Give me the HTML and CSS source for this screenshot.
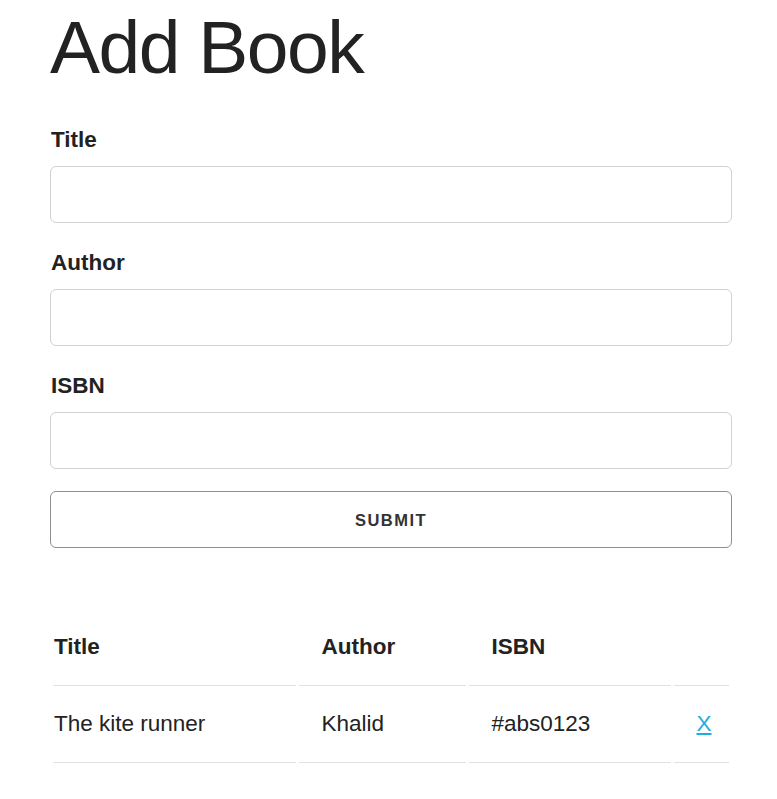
FILE: index.html
```html
<!DOCTYPE html>
<html lang="en">
<head>
<meta charset="utf-8">
<title>Add Book</title>
<link rel="stylesheet" href="styles.css">
</head>
<body>
<div class="container">
  <h1 class="title">Add Book</h1>
  <form class="book-form">
    <label class="field-label" for="title">Title</label>
    <input class="field-input" type="text" id="title">
    <label class="field-label" for="author">Author</label>
    <input class="field-input" type="text" id="author">
    <label class="field-label" for="isbn">ISBN</label>
    <input class="field-input" type="text" id="isbn">
    <button class="submit-btn" type="submit">Submit</button>
  </form>
  <table class="book-table">
    <thead>
      <tr>
        <th class="col-title">Title</th>
        <th class="col-author">Author</th>
        <th class="col-isbn">ISBN</th>
        <th class="col-del"></th>
      </tr>
    </thead>
    <tbody>
      <tr>
        <td>The kite runner</td>
        <td>Khalid</td>
        <td>#abs0123</td>
        <td><a class="delete" href="#">X</a></td>
      </tr>
    </tbody>
  </table>
</div>
</body>
</html>
```

FILE: styles.css
```css
html, body {
  margin: 0;
  padding: 0;
  background: #fff;
}

body {
  font-family: "Liberation Sans", Arial, Helvetica, sans-serif;
  font-size: 22.5px;
  line-height: 36px;
  color: #222;
}

.container {
  width: 682px;
  margin-left: 50px;
  padding-top: 2px;
}

.title {
  margin: 0 0 30px 0;
  font-size: 75px;
  line-height: 90px;
  font-weight: 400;
  letter-spacing: -1.5px;
}

.book-form {
  margin: 0 0 61px 0;
  display: flex;
  flex-direction: column;
}

.field-label {
  display: block;
  font-weight: 700;
  margin-bottom: 7.5px;
  padding-left: 1px;
}

.field-input {
  box-sizing: border-box;
  width: 100%;
  height: 57px;
  padding: 9px 15px;
  border: 1px solid #d1d1d1;
  border-radius: 6px;
  background: #fff;
  margin: 0 0 22.5px 0;
  font: inherit;
}

.submit-btn {
  box-sizing: border-box;
  width: 100%;
  height: 57px;
  margin: 0;
  padding: 2px 45px 0;
  border: 1px solid #8f8f8f;
  border-radius: 6px;
  background: transparent;
  color: #333;
  font-family: "Liberation Sans", Arial, sans-serif;
  font-size: 16.5px;
  font-weight: 700;
  letter-spacing: 1.5px;
  text-transform: uppercase;
  line-height: 53px;
  text-align: center;
}

.book-table {
  width: 682px;
  table-layout: fixed;
  border-collapse: separate;
  border-spacing: 3px;
  margin: 0;
}

.book-table th,
.book-table td {
  box-sizing: border-box;
  text-align: left;
  padding: 17px 22.5px 20px;
  border-bottom: 1.5px solid #e1e1e1;
  line-height: 36px;
}

.book-table th {
  font-weight: 700;
}

.book-table th:first-child,
.book-table td:first-child {
  padding-left: 1px;
}

.book-table th:last-child,
.book-table td:last-child {
  padding-right: 0;
}

.col-title { width: 243px; }
.col-author { width: 167px; }
.col-isbn { width: 202px; }
.col-del { width: 55px; }

.delete {
  color: #1eaedb;
  text-decoration: underline;
}
```
